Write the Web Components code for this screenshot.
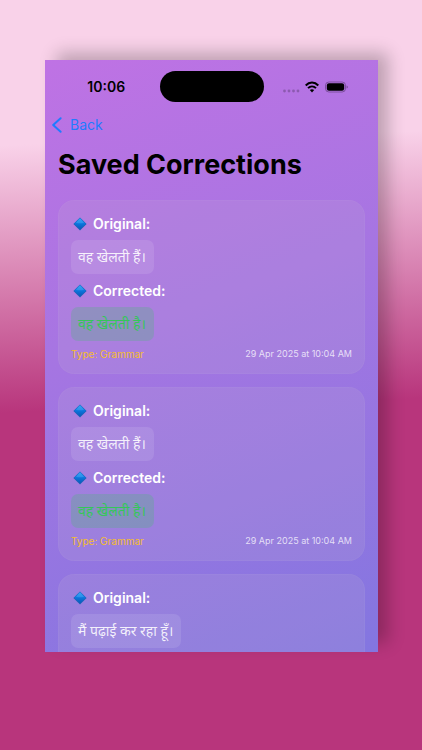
<!DOCTYPE html>
<html lang="en">
<head>
<meta charset="utf-8">
<meta name="viewport" content="width=device-width, initial-scale=1">
<title>Saved Corrections</title>
<style>
    body {
        margin: 0;
        min-height: 100vh;
        display: flex;
        box-sizing: border-box;
        padding: 60px 44px 98px 45px;
        background: linear-gradient(178deg, #f9d2e9 19%, #b8357c 54%);
        font-family: Inter, "Noto Sans", sans-serif;
    }
</style>
</head>
<body>
<phone-screen>
    <status-bar slot="status" time="10:06"></status-bar>
    <nav-header slot="header" back="Back">Saved Corrections</nav-header>
    <correction-card>
        <correction-text>वह खेलती हैं।</correction-text>
        <correction-text slot="corrected" tone="green">वह खेलती है।</correction-text>
        <span slot="type">Type: Grammar</span>
        <span slot="date">29 Apr 2025 at 10:04 AM</span>
    </correction-card>
    <correction-card>
        <correction-text>वह खेलती हैं।</correction-text>
        <correction-text slot="corrected" tone="green">वह खेलती है।</correction-text>
        <span slot="type">Type: Grammar</span>
        <span slot="date">29 Apr 2025 at 10:04 AM</span>
    </correction-card>
    <correction-card pending>
        <correction-text>मैं पढ़ाई कर रहा हूँ।</correction-text>
    </correction-card>
</phone-screen>

<script>
class PhoneScreen extends HTMLElement {
    connectedCallback() {
        this.attachShadow({ mode: 'open' });
        this.shadowRoot.innerHTML = `
            <style>
                :host {
                    display: flex;
                    flex-direction: column;
                    flex: 1;
                    min-width: 0;
                    height: calc(100vh - 158px);
                    overflow: hidden;
                    background: linear-gradient(160deg, #bf72e4 0%, #a675e2 42%, #8376e0 100%);
                    box-shadow: 11px -8px 16px -1px rgba(0, 0, 0, 0.24);
                }

                main {
                    display: flex;
                    flex-direction: column;
                    gap: 13px;
                    padding: 0 13px;
                }
            </style>
            <slot name="status"></slot>
            <slot name="header"></slot>
            <main><slot></slot></main>
        `;
    }
}

class StatusBar extends HTMLElement {
    connectedCallback() {
        this.attachShadow({ mode: 'open' });
        this.shadowRoot.innerHTML = `
            <style>
                :host {
                    display: grid;
                    grid-template-columns: 1fr 104px 1fr;
                    align-items: center;
                    flex-shrink: 0;
                    padding: 11px 0 9px;
                    color: #000;
                }

                time {
                    justify-self: center;
                    padding-left: 8px;
                    font-size: 14px;
                    font-weight: 600;
                }

                .island {
                    height: 31px;
                    border-radius: 16px;
                    background: #000;
                }

                .icons {
                    display: flex;
                    align-items: center;
                    gap: 5px;
                    padding-left: 18px;
                }
            </style>
            <time>${this.getAttribute('time')}</time>
            <div class="island"></div>
            <div class="icons">
                <svg width="18" height="12" viewBox="0 0 18 12" fill="#000" opacity="0.22">
                    <circle cx="2.5" cy="10" r="1.4"/><circle cx="7" cy="10" r="1.4"/>
                    <circle cx="11.5" cy="10" r="1.4"/><circle cx="16" cy="10" r="1.4"/>
                </svg>
                <svg width="14" height="12" viewBox="0 0 14 12" fill="none" stroke="#000" stroke-width="2">
                    <path d="M.7 4.5C4.3 .6 9.7 .6 13.3 4.5"/>
                    <path d="M3 7.1C5.3 4.9 8.7 4.9 11 7.1"/>
                    <path d="M7 11.4 4.8 9.1C6.1 7.9 7.9 7.9 9.2 9.1Z" fill="#000" stroke="none"/>
                </svg>
                <svg width="24" height="12" viewBox="0 0 24 12">
                    <rect x="1.5" y="1" width="20" height="10" rx="3.4" fill="none" stroke="#000" stroke-opacity="0.3"/>
                    <rect x="2.8" y="2.2" width="17.4" height="7.6" rx="2.2"/>
                    <path d="M22.6 4.4c1.5.5 1.5 2.7 0 3.2Z" opacity="0.4"/>
                </svg>
            </div>
        `;
    }
}

class NavHeader extends HTMLElement {
    connectedCallback() {
        this.attachShadow({ mode: 'open' });
        this.shadowRoot.innerHTML = `
            <style>
                :host {
                    display: block;
                    flex-shrink: 0;
                    padding: 3px 7px 18px;
                }

                button {
                    display: flex;
                    align-items: center;
                    gap: 8px;
                    height: 21px;
                    padding: 0;
                    border: none;
                    background: none;
                    color: #1f7cff;
                    font: inherit;
                    font-size: 14px;
                    line-height: 20px;
                    cursor: pointer;
                }

                h1 {
                    margin: 13px 6px 0;
                    font-size: 27px;
                    line-height: 34px;
                    font-weight: 700;
                    color: #000;
                    white-space: nowrap;
                }
            </style>
            <button type="button">
                <svg width="10" height="16" viewBox="0 0 10 16" fill="none" stroke="currentColor" stroke-width="2" stroke-linecap="round" stroke-linejoin="round">
                    <path d="M8.6 1.2 1.2 8l7.4 6.8"/>
                </svg>
                ${this.getAttribute('back')}
            </button>
            <h1><slot></slot></h1>
        `;
    }
}

class CorrectionLabel extends HTMLElement {
    connectedCallback() {
        this.attachShadow({ mode: 'open' });
        this.shadowRoot.innerHTML = `
            <style>
                :host {
                    display: flex;
                    align-items: center;
                    gap: 6px;
                    padding-left: 2px;
                    color: #fff;
                    font-size: 14px;
                    line-height: 21px;
                    font-weight: 600;
                }
            </style>
            <svg width="14" height="14" viewBox="0 0 14 14">
                <defs>
                    <linearGradient id="gem" x1="0" y1="0" x2="0" y2="1">
                        <stop offset="0" stop-color="#2b9af0"/>
                        <stop offset="0.5" stop-color="#0b74dc"/>
                        <stop offset="1" stop-color="#0a58b8"/>
                    </linearGradient>
                </defs>
                <path d="M7 .4 13.6 7 7 13.6 .4 7Z" fill="#1c62b8"/>
                <path d="M7 1 12.8 6.8 7 12.6 1.2 6.8Z" fill="url(#gem)"/>
                <path d="M7 1.6 11 5.7C8.6 6.5 5.4 6.5 3 5.7Z" fill="#4fb2fa" opacity="0.4"/>
            </svg>
            <slot></slot>
        `;
    }
}

class CorrectionText extends HTMLElement {
    connectedCallback() {
        this.attachShadow({ mode: 'open' });
        this.shadowRoot.innerHTML = `
            <style>
                :host {
                    display: block;
                    width: fit-content;
                    padding: 6px 8px 6px 7px;
                    border-radius: 7px;
                    background: rgba(255, 255, 255, 0.1);
                    color: rgba(255, 255, 255, 0.88);
                    font-family: "Noto Sans", sans-serif;
                    font-size: 14px;
                    line-height: 22px;
                }

                :host([tone="green"]) {
                    background: rgba(72, 185, 115, 0.28);
                    color: #34c759;
                }
            </style>
            <slot></slot>
        `;
    }
}

class CorrectionCard extends HTMLElement {
    connectedCallback() {
        // cards without a correction yet only show the original sentence
        const rest = this.hasAttribute('pending') ? '' : `
            <correction-label>Corrected:</correction-label>
            <slot name="corrected"></slot>
            <footer>
                <slot name="type"></slot>
                <slot name="date"></slot>
            </footer>
        `;
        this.attachShadow({ mode: 'open' });
        this.shadowRoot.innerHTML = `
            <style>
                :host {
                    display: flex;
                    flex-direction: column;
                    flex-shrink: 0;
                    gap: 6px;
                    box-sizing: border-box;
                    min-height: 174px;
                    padding: 13px;
                    border-radius: 16px;
                    background: rgba(195, 180, 210, 0.17);
                    box-shadow: inset 0 0 0 1px rgba(255, 255, 255, 0.03);
                }

                footer {
                    display: flex;
                    justify-content: space-between;
                    line-height: 14px;
                }

                ::slotted([slot="type"]) {
                    color: #f5bd2e;
                    font-size: 10px;
                }

                ::slotted([slot="date"]) {
                    color: rgba(255, 255, 255, 0.75);
                    font-size: 9px;
                }
            </style>
            <correction-label>Original:</correction-label>
            <slot></slot>
            ${rest}
        `;
    }
}

customElements.define('phone-screen', PhoneScreen);
customElements.define('status-bar', StatusBar);
customElements.define('nav-header', NavHeader);
customElements.define('correction-label', CorrectionLabel);
customElements.define('correction-text', CorrectionText);
customElements.define('correction-card', CorrectionCard);
</script>
</body>
</html>
